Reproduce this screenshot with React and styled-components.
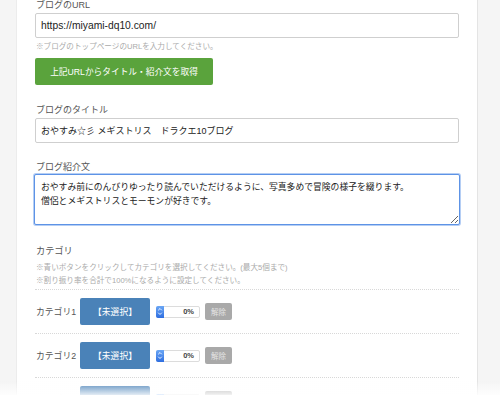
import React from "react";
import styled, { createGlobalStyle } from "styled-components";

const Global = createGlobalStyle`
  html, body { margin: 0; padding: 0; background: #f5f5f5; }
  body { font-family: "Liberation Sans", "Noto Sans CJK JP", sans-serif; overflow: hidden; }
  * { box-sizing: border-box; }
`;

const Page = styled.div`
  display: flex;
  align-items: flex-start;
  height: 395px;
  overflow: hidden;
`;

const Panel = styled.main`
  margin-left: 16px;
  width: 462px;
  min-height: 420px;
  background: #fff;
  border-left: 1px solid #ececec;
  border-right: 1px solid #e4e4e4;
  padding: 0 18px 0 18px;
  display: flex;
  flex-direction: column;
  & > * { flex-shrink: 0; }
`;

const Label = styled.div`
  font-size: ${(p) => p.$size || 9}px;
  line-height: ${(p) => p.$lh || 14}px;
  color: #555;
  margin-top: ${(p) => p.$mt || 0}px;
  padding-left: 1px;
`;

const TextInput = styled.input`
  display: block;
  width: 100%;
  height: 25px;
  margin-top: ${(p) => p.$mt || 0}px;
  border: 1px solid #cfcfcf;
  border-radius: 2px;
  padding: 0 5px;
  font-family: "Liberation Sans", "Noto Sans CJK JP", sans-serif;
  font-size: ${(p) => p.$size || 9}px;
  color: #222;
  background: #fff;
  outline: none;
`;

const Note = styled.div`
  font-size: 7.6px;
  line-height: 13px;
  color: #aaa;
  margin-top: ${(p) => p.$mt || 0}px;
  padding-left: 1px;
`;

const GreenButton = styled.button`
  align-self: flex-start;
  margin-top: 5px;
  width: 178px;
  height: 27px;
  border: none;
  border-radius: 2px;
  background: #5aa33c;
  color: #fff;
  font-family: "Liberation Sans", "Noto Sans CJK JP", sans-serif;
  font-size: 8.7px;
  padding: 0;
`;

const TextArea = styled.textarea`
  display: block;
  width: calc(100% + 2px);
  margin-left: -1px;
  height: 51px;
  margin-top: 0;
  border: 1px solid #5d93e6;
  box-shadow: 0 0 0 1px rgba(120, 165, 235, 0.55);
  border-radius: 2px;
  padding: 5px 6px;
  font-family: "Liberation Sans", "Noto Sans CJK JP", sans-serif;
  font-size: 8.8px;
  line-height: 14px;
  color: #222;
  outline: none;
  resize: vertical;
`;

const NoteGroup = styled.div`
  margin-top: 3px;
  padding-bottom: 2px;
  border-bottom: 1px dotted #d8d8d8;
`;

const Row = styled.div`
  display: flex;
  align-items: center;
  height: 44px;
  border-bottom: 1px dotted #d8d8d8;
`;

const RowLabel = styled.div`
  width: 45px;
  font-size: 8.8px;
  color: #555;
  padding-left: 1px;
`;

const BlueButton = styled.button`
  width: 70px;
  height: 27px;
  border: none;
  border-radius: 2px;
  background: #4a82b8;
  color: #fff;
  font-family: "Liberation Sans", "Noto Sans CJK JP", sans-serif;
  font-size: 8.8px;
  padding: 0;
`;

const Spinner = styled.div`
  display: flex;
  align-items: center;
  margin-left: 6px;
  width: 44px;
  height: 12px;
  border: 1px solid #dcdcdc;
  border-radius: 2px;
  background: #fff;
`;

const Stepper = styled.div`
  width: 8px;
  height: 12px;
  margin: -1px 0 -1px -1px;
  border-radius: 2px 0 0 2px;
  background: linear-gradient(#6aa6f5, #2e6ee0);
  display: flex;
  align-items: center;
  justify-content: center;
`;

const SpinValue = styled.div`
  flex: 1;
  text-align: right;
  padding-right: 5px;
  font-size: 7.5px;
  font-weight: bold;
  color: #444;
`;

const GrayButton = styled.button`
  margin-left: 5px;
  width: 27px;
  height: 17px;
  border: none;
  border-radius: 2px;
  background: #a9a9a9;
  color: #e4e4e4;
  font-family: "Liberation Sans", "Noto Sans CJK JP", sans-serif;
  font-size: 7.5px;
  padding: 0;
`;

const Fade = styled.div`
  position: fixed;
  left: 0;
  right: 0;
  bottom: 0;
  height: 14px;
  background: linear-gradient(rgba(255, 255, 255, 0), rgba(255, 255, 255, 0.85));
  pointer-events: none;
`;

function CategoryRow({ n }) {
  return (
    <Row>
      <RowLabel>カテゴリ{n}</RowLabel>
      <BlueButton>【未選択】</BlueButton>
      <Spinner>
        <Stepper>
          <svg width="6" height="9" viewBox="0 0 6 9">
            <path d="M1.2 3.3 L3 1.5 L4.8 3.3 M1.2 5.7 L3 7.5 L4.8 5.7" fill="none" stroke="#fff" strokeWidth="0.9" />
          </svg>
        </Stepper>
        <SpinValue>0%</SpinValue>
      </Spinner>
      <GrayButton>解除</GrayButton>
    </Row>
  );
}

export default function App() {
  return (
    <>
      <Global />
      <Page>
        <Panel>
          <Label $lh={13} style={{ marginTop: -1 }}>ブログのURL</Label>
          <TextInput $mt={1} $size={10.3} defaultValue="https://miyami-dq10.com/" readOnly />
          <Note $mt={2}>※ブログのトップページのURLを入力してください。</Note>
          <GreenButton>上記URLからタイトル・紹介文を取得</GreenButton>
          <Label $mt={18}>ブログのタイトル</Label>
          <TextInput $mt={1} $size={9} defaultValue="おやすみ☆彡 メギストリス　ドラクエ10ブログ" readOnly />
          <Label $mt={17}>ブログ紹介文</Label>
          <TextArea
            readOnly
            defaultValue={"おやすみ前にのんびりゆったり読んでいただけるように、写真多めで冒険の様子を綴ります。\n僧侶とメギストリスとモーモンが好きです。"}
          />
          <Label $mt={19} $size={9.2}>カテゴリ</Label>
          <NoteGroup>
            <Note>※青いボタンをクリックしてカテゴリを選択してください。(最大5個まで)</Note>
            <Note>※割り振り率を合計で100%になるように設定してください。</Note>
          </NoteGroup>
          <CategoryRow n={1} />
          <CategoryRow n={2} />
          <CategoryRow n={3} />
        </Panel>
      </Page>
      <Fade />
    </>
  );
}
